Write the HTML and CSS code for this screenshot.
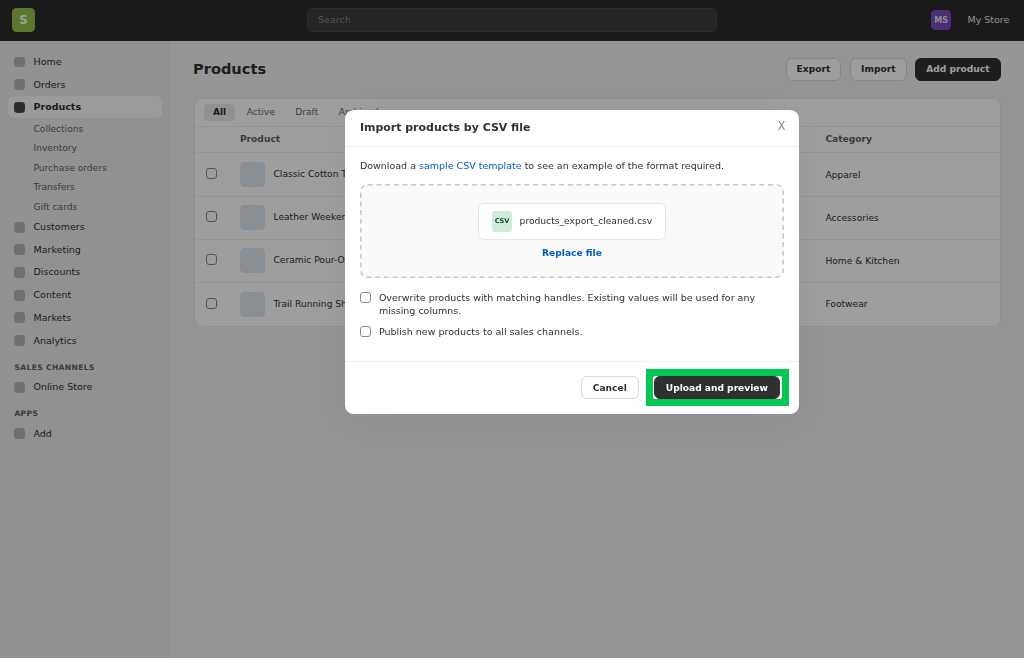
FILE: index.html
```
<!DOCTYPE html>
<html lang="en">
<head>
<meta charset="utf-8">
<title>Products - My Store</title>
<link rel="stylesheet" href="styles.css">
</head>
<body>

<header class="topbar">
  <div class="logo">S</div>
  <div class="search">Search</div>
  <div class="account">
    <span class="avatar">MS</span>
    <span>My Store</span>
  </div>
</header>

<div class="layout">
  <nav class="sidebar">
    <a class="nav-item"><i></i>Home</a>
    <a class="nav-item"><i></i>Orders</a>
    <a class="nav-item active"><i></i>Products</a>
    <a class="nav-sub">Collections</a>
    <a class="nav-sub">Inventory</a>
    <a class="nav-sub">Purchase orders</a>
    <a class="nav-sub">Transfers</a>
    <a class="nav-sub">Gift cards</a>
    <a class="nav-item"><i></i>Customers</a>
    <a class="nav-item"><i></i>Marketing</a>
    <a class="nav-item"><i></i>Discounts</a>
    <a class="nav-item"><i></i>Content</a>
    <a class="nav-item"><i></i>Markets</a>
    <a class="nav-item"><i></i>Analytics</a>
    <div class="nav-title">Sales channels</div>
    <a class="nav-item"><i></i>Online Store</a>
    <div class="nav-title">Apps</div>
    <a class="nav-item"><i></i>Add</a>
  </nav>

  <main class="main">
    <div class="page-head">
      <h1>Products</h1>
      <div class="actions">
        <button class="btn">Export</button>
        <button class="btn">Import</button>
        <button class="btn btn-primary">Add product</button>
      </div>
    </div>

    <div class="card">
      <div class="tabs">
        <span class="tab active">All</span>
        <span class="tab">Active</span>
        <span class="tab">Draft</span>
        <span class="tab">Archived</span>
      </div>
      <div class="row row-head">
        <span></span><span>Product</span><span>Category</span>
      </div>
      <div class="row">
        <span class="check"></span>
        <div class="product"><span class="thumb"></span>Classic Cotton T-Shirt</div>
        <span class="category">Apparel</span>
      </div>
      <div class="row">
        <span class="check"></span>
        <div class="product"><span class="thumb"></span>Leather Weekender Bag</div>
        <span class="category">Accessories</span>
      </div>
      <div class="row">
        <span class="check"></span>
        <div class="product"><span class="thumb"></span>Ceramic Pour-Over Set</div>
        <span class="category">Home &amp; Kitchen</span>
      </div>
      <div class="row">
        <span class="check"></span>
        <div class="product"><span class="thumb"></span>Trail Running Shoes</div>
        <span class="category">Footwear</span>
      </div>
    </div>
  </main>
</div>

<div class="overlay">
  <div class="modal">
    <div class="modal-head">
      <h2>Import products by CSV file</h2>
      <span class="close">X</span>
    </div>
    <div class="modal-body">
      <p>Download a <a class="link">sample CSV template</a> to see an example of the format required.</p>
      <div class="dropzone">
        <svg class="dashes" width="424" height="94"><rect x=".8" y=".8" width="422.4" height="92.4" rx="7"/></svg>
        <div class="file"><span class="file-icon">CSV</span>products_export_cleaned.csv</div>
        <a class="replace">Replace file</a>
      </div>
      <label class="option"><span class="check"></span><span>Overwrite products with matching handles. Existing values will be used for any missing columns.</span></label>
      <label class="option"><span class="check"></span><span>Publish new products to all sales channels.</span></label>
    </div>
    <div class="modal-foot">
      <button class="btn">Cancel</button>
      <div class="highlight"><div class="corners"><div class="ring"><button class="btn btn-primary">Upload and preview</button></div></div></div>
    </div>
  </div>
</div>

</body>
</html>
```
FILE: styles.css
```
* {
  box-sizing: border-box;
}

body {
  margin: 0;
  height: 658px;
  overflow: hidden;
  font-family: "DejaVu Sans", sans-serif;
  font-size: 9.5px;
  color: #303030;
  background: #f1f1f1;
}

h1, h2, p {
  margin: 0;
}

/* top bar */
.topbar {
  display: grid;
  grid-template-columns: 1fr 410px 1fr;
  align-items: center;
  height: 41px;
  padding: 0 14.6px 1px 11.7px;
  background: #2b2b2b;
  color: #e3e3e3;
}

.logo {
  display: flex;
  align-items: center;
  justify-content: center;
  width: 23.4px;
  height: 23.4px;
  border-radius: 4.4px;
  background: #95bf47;
  color: #fff;
  font-size: 11.7px;
  font-weight: bold;
}

.search {
  height: 23.4px;
  margin-left: 1.6px;
  margin-right: -1.6px;
  padding: 0 10px;
  line-height: 21.4px;
  border: 1px solid #4a4a4a;
  border-radius: 5.9px;
  background: #3c3c3c;
  color: #8a8a8a;
}

.account {
  display: flex;
  align-items: center;
  justify-content: flex-end;
  gap: 16px;
}

.account span:last-child {
  margin-top: -1px;
}

.avatar {
  display: flex;
  align-items: center;
  justify-content: center;
  width: 20.5px;
  height: 20.5px;
  border-radius: 4.4px;
  background: #7f4bc4;
  font-size: 8px;
  font-weight: bold;
}

.layout {
  display: flex;
  height: 617px;
}

/* sidebar */
.sidebar {
  width: 170px;
  padding: 10px 7.2px 0 7.6px;
  background: #ebebeb;
  border-right: 1px solid #e8e8e8;
}

.nav-item {
  display: flex;
  align-items: center;
  height: 21.2px;
  margin-bottom: 1.5px;
  padding-left: 6.6px;
  border-radius: 5.9px;
}

.nav-item i {
  width: 10.8px;
  height: 10.8px;
  margin: 1px 8.5px 0 0;
  border-radius: 3.4px;
  background: #b5b5b5;
}

.nav-item.active {
  background: #fafafa;
  font-weight: bold;
}

.nav-item.active i {
  background: #4a4a4a;
}

.nav-sub {
  display: block;
  height: 19.4px;
  padding-left: 25.9px;
  line-height: 21.2px;
  font-size: 9.1px;
  color: #616161;
}

.nav-title {
  padding: 10.4px 0 3.6px 6.8px;
  line-height: 10px;
  font-size: 7.6px;
  font-weight: bold;
  letter-spacing: .35px;
  text-transform: uppercase;
  color: #616161;
}

/* main */
.main {
  flex: 1;
  padding: 17.4px 23.5px 0;
}

.page-head {
  display: flex;
  align-items: center;
  justify-content: space-between;
  height: 23px;
  margin-bottom: 17.1px;
}

h1 {
  margin: -2px 0 0 -.5px;
  font-size: 14.6px;
}

.actions {
  display: flex;
  gap: 8.8px;
}

.btn {
  height: 23px;
  padding: 0 10px 1px;
  border: 1px solid #d9d9d9;
  border-radius: 5.9px;
  background: #fff;
  color: #303030;
  font-family: inherit;
  font-size: 9.1px;
  font-weight: bold;
}

.btn-primary {
  border-color: #303030;
  background: #303030;
  color: #fff;
}

.card {
  border: 1px solid #e9e9e9;
  border-radius: 8.8px;
  background: #fff;
}

.tabs {
  display: flex;
  align-items: center;
  gap: 2.9px;
  height: 28px;
  padding: 0 9.6px .5px;
  border-bottom: 1px solid #f0f0f0;
}

.tab {
  height: 16.5px;
  padding: 0 8.8px;
  line-height: 16.5px;
  border-radius: 4.4px;
  font-size: 9.1px;
  color: #616161;
}

.tab.active {
  background: #ebebeb;
  font-weight: bold;
  color: #303030;
}

.row {
  display: grid;
  grid-template-columns: 34.4px 585.5px 1fr;
  align-items: center;
  height: 43.1px;
  padding-left: 11px;
  border-bottom: 1px solid #f0f0f0;
  font-size: 9.15px;
}

.row:last-child {
  border-bottom: 0;
}

.row-head {
  height: 26px;
  padding-bottom: 1px;
  font-weight: bold;
  color: #616161;
}

.check {
  width: 11.5px;
  height: 11.5px;
  border: 1px solid #8a8a8a;
  border-radius: 3px;
}

.row .check {
  margin-bottom: 2px;
}

.product {
  display: flex;
  align-items: center;
  line-height: 23px;
}

.thumb {
  width: 25px;
  height: 25px;
  margin-right: 8.6px;
  border-radius: 4.4px;
  background: #dfe7ee;
}

/* import dialog */
.overlay {
  position: fixed;
  inset: 0;
  display: flex;
  align-items: flex-start;
  justify-content: center;
  padding: 109.7px 0 0 120px;
  background: rgba(0, 0, 0, .38);
}

.modal {
  width: 453.4px;
  height: 304px;
  display: flex;
  flex-direction: column;
  border-radius: 8.8px;
  background: #fff;
  box-shadow: 0 6px 44px rgba(0, 0, 0, .06);
}

.modal-head {
  display: flex;
  align-items: center;
  justify-content: space-between;
  height: 37px;
  padding: 0 13.2px 2px 14.6px;
  border-bottom: 1px solid #efefef;
}

h2 {
  padding-top: 1px;
  font-size: 10.97px;
}

.close {
  margin-top: -1px;
  font-size: 11.7px;
  color: #8a8a8a;
}

.modal-body {
  flex: 1;
  padding: 12.8px 14.6px 0;
}

.modal-body p {
  line-height: 14px;
}

.link {
  color: #005bd3;
}

.dropzone {
  position: relative;
  display: flex;
  flex-direction: column;
  align-items: center;
  height: 94px;
  margin: 10.7px 0 12.8px;
  padding-top: 19px;
  border-radius: 7.3px;
  background: #fafafa;
  font-size: 9.15px;
}

.dashes {
  position: absolute;
  top: 0;
  left: 0;
}

.dashes rect {
  fill: none;
  stroke: #c9c9c9;
  stroke-width: 1.5;
  stroke-dasharray: 4.8 3.9;
}

.file {
  display: flex;
  align-items: center;
  gap: 7.3px;
  height: 36.5px;
  padding: 0 12.6px;
  border: 1px solid #e6e6e6;
  border-radius: 5.9px;
  background: #fff;
}

.file-icon {
  width: 20.5px;
  height: 20.5px;
  line-height: 20.5px;
  border-radius: 2.9px;
  background: #d1ebdb;
  color: #0f5132;
  text-align: center;
  font-size: 6.6px;
  font-weight: bold;
}

.replace {
  margin-top: 8.6px;
  color: #005bd3;
  font-weight: bold;
}

.option {
  display: flex;
  gap: 7.5px;
  margin-bottom: 7.8px;
  line-height: 13.3px;
}

.option .check {
  flex: none;
  margin-top: .6px;
}

.modal-foot {
  display: flex;
  align-items: center;
  justify-content: flex-end;
  gap: 7px;
  height: 52.5px;
  padding-right: 10.2px;
  border-top: 1px solid #efefef;
}

.modal-foot .btn {
  padding: 0 11px;
}

/* green marker round the next step */
.highlight {
  padding: 7px;
  background: #00c853;
}

.corners {
  background: #e5484d;
}

.ring {
  padding: 0 1.6px 0 1px;
  border-radius: 2px;
  background: #fff;
}

.ring .btn {
  display: block;
}
```
